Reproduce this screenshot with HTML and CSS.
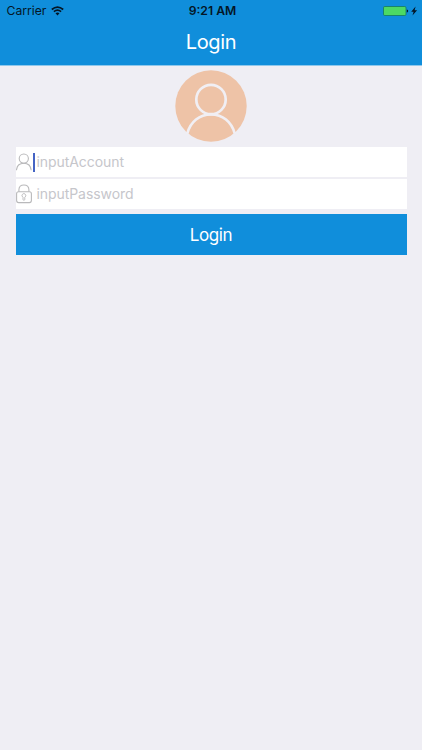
FILE: index.html
```html
<!DOCTYPE html>
<html lang="en">
<head>
<meta charset="utf-8">
<title>Login</title>
<link rel="stylesheet" href="styles.css">
</head>
<body>
<header class="header">
  <div class="status">
    <div class="status-left">
      <span class="carrier">Carrier</span>
      <svg class="wifi" width="13" height="10" viewBox="0 0 13 10" fill="none" stroke="#041626" stroke-width="1.7">
        <path d="M.8 3.5Q6.5-1.2 12.2 3.5M2.9 5.7Q6.5 2.7 10.1 5.7"/>
        <path d="M4.5 7.3Q6.5 5.6 8.5 7.3L6.5 9.4Z" fill="#041626" stroke="none"/>
      </svg>
    </div>
    <span class="time">9:21 AM</span>
    <div class="status-right">
      <svg width="35" height="12" viewBox="0 0 35 12">
        <rect x=".5" y="1.5" width="22.5" height="9" rx="1.2" fill="#4cd964" stroke="#14775e" stroke-width=".8"/>
        <path d="M23.8 4.4q1.4.2 1.4 1.6t-1.4 1.6z" fill="#041626"/>
        <path d="M32.6 1.400L28.200 6.700h2.400L29.500 10.600 34.100 5.200h-2.500z" fill="#041626"/>
      </svg>
    </div>
  </div>
  <h1 class="title">Login</h1>
</header>
<main class="content">
  <svg class="avatar" width="72" height="72" viewBox="0 0 72 72" fill="none">
    <circle cx="36" cy="36" r="35.700" fill="#eec3a7"/>
    <g stroke="#f1eff4" stroke-width="2.700">
      <circle cx="36" cy="29.500" r="14.700"/>
      <path d="M12.300 63.500C15.500 51.500 24.500 44.500 36 44.500S56.500 51.500 59.700 63.500"/>
    </g>
  </svg>
  <form class="form">
    <div class="field">
      <svg width="17" height="20" viewBox="0 0 17 20" fill="none" stroke="#b9b9bb" stroke-width="1.100">
        <circle cx="7.800" cy="6.600" r="4.600"/>
        <path d="M.4 18.300C.8 14 3.800 11.300 7.800 11.300S14.800 14 15.200 18.300"/>
      </svg>
      <span class="caret"></span>
      <span class="placeholder account">inputAccount</span>
    </div>
    <div class="field">
      <svg width="17" height="20" viewBox="0 0 17 20" fill="none" stroke="#b9b9bb" stroke-width="1.100">
        <rect x=".6" y="7.800" width="14.800" height="10.800" rx="2"/>
        <path d="M2.900 7.800V5.800C2.900 2.800 4.900 1 7.900 1s5 1.800 5 4.800v2"/>
        <path d="M7 13.200a1.900 1.900 0 1 1 1.800 0v2.200a.9.900 0 0 1-1.800 0z" stroke-width=".9"/>
      </svg>
      <span class="placeholder password">inputPassword</span>
    </div>
    <button class="submit" type="button">Login</button>
  </form>
</main>
</body>
</html>
```
FILE: styles.css
```css
* {
  box-sizing: border-box;
}

body {
  margin: 0;
  min-height: 750px;
  background: #efeef4;
  font-family: Inter, "Liberation Sans", sans-serif;
}

.header {
  height: 66px;
  background: #108edb;
  background-clip: padding-box;
  border-bottom: 1px solid #8fc8ec;
}

.status {
  display: grid;
  grid-template-columns: 1fr auto 1fr;
  align-items: center;
  height: 22px;
  padding: 0 4.5px 0 6.5px;
  color: #041626;
  line-height: 22px;
}

.status-left {
  display: flex;
  align-items: center;
  gap: 5px;
  margin-top: -1px;
}

.carrier {
  width: 39.5px;
  padding-top: 1px;
  font-size: 12.2px;
}

.time {
  padding-left: 1px;
  font-size: 12.2px;
  font-weight: 600;
}

.status-right {
  display: flex;
  justify-content: flex-end;
  margin-top: -1px;
}

.title {
  margin: 5px 0 0;
  color: #fff;
  font-size: 20px;
  font-weight: 400;
  letter-spacing: -0.3px;
  line-height: 30px;
  text-align: center;
}

.content {
  padding: 4px 15.5px 0;
}

.avatar {
  display: block;
  margin: 0 auto 5px;
}

.form {
  display: flex;
  flex-direction: column;
  gap: 2px;
}

.field {
  display: flex;
  align-items: center;
  height: 30px;
  background: #fff;
}

.caret {
  width: 2px;
  height: 19px;
  background: #4564c4;
}

.placeholder {
  color: #c6c6cb;
  font-size: 14px;
  letter-spacing: -0.07px;
  line-height: 30px;
}

.account {
  margin-left: 2px;
}

.password {
  margin-left: 4px;
}

.submit {
  height: 41px;
  margin-top: 3px;
  padding: 1px 0 0;
  border: 0;
  background: #108edb;
  color: #fff;
  font-family: inherit;
  font-size: 17px;
  letter-spacing: -0.35px;
  line-height: 40px;
}
```
